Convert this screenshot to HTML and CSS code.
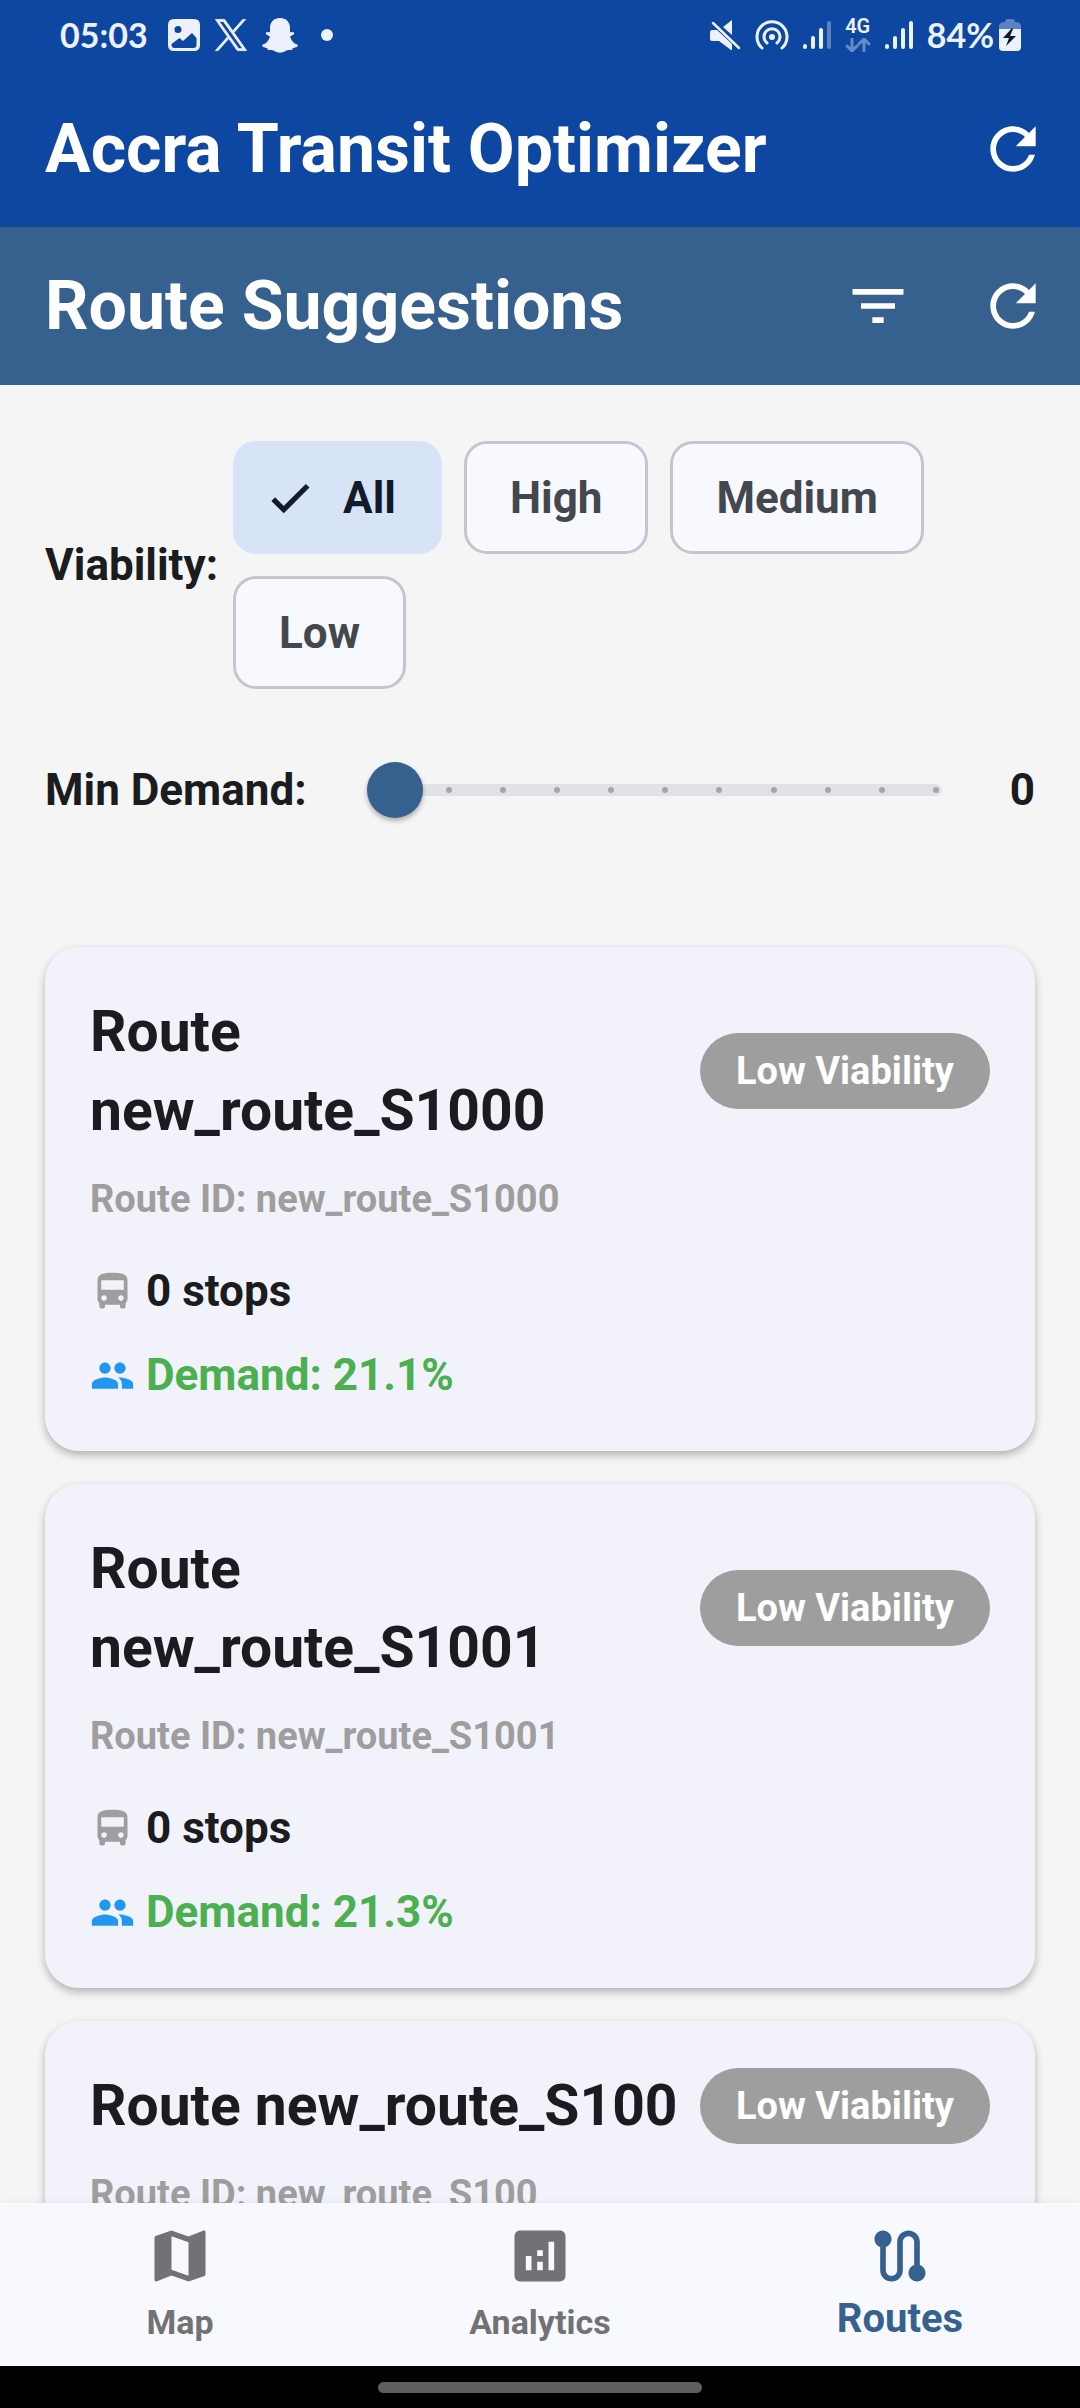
FILE: index.html
```html
<!DOCTYPE html>
<html lang="en">
<head>
<meta charset="utf-8">
<meta name="viewport" content="width=device-width, initial-scale=1">
<title>Accra Transit Optimizer</title>
<link rel="stylesheet" href="styles.css">
</head>
<body>
<svg class="sprite" aria-hidden="true">
  <symbol id="refresh" viewBox="0 0 24 24"><path d="M17.65 6.35C16.2 4.9 14.21 4 12 4c-4.42 0-7.99 3.58-7.99 8s3.57 8 7.99 8c3.73 0 6.84-2.55 7.73-6h-2.08c-.82 2.33-3.04 4-5.65 4-3.31 0-6-2.69-6-6s2.69-6 6-6c1.66 0 3.14.69 4.22 1.78L13 11h7V4l-2.35 2.35z"/></symbol>
  <symbol id="bus" viewBox="0 0 24 24"><path d="M4 16c0 .88.39 1.67 1 2.22V20c0 .55.45 1 1 1h1c.55 0 1-.45 1-1v-1h8v1c0 .55.45 1 1 1h1c.55 0 1-.45 1-1v-1.78c.61-.55 1-1.34 1-2.22V6c0-3.5-3.58-4-8-4s-8 .5-8 4v10zm3.5 1c-.83 0-1.5-.67-1.5-1.5S6.67 14 7.5 14s1.500.67 1.500 1.500S8.330 17 7.500 17zm9 0c-.83 0-1.500-.67-1.500-1.500s.67-1.500 1.500-1.500 1.500.67 1.500 1.500-.67 1.500-1.500 1.500zm1.500-6H6V6h12v5z"/></symbol>
  <symbol id="people" viewBox="0 0 24 24"><path d="M16 11c1.660 0 2.990-1.340 2.990-3S17.660 5 16 5c-1.660 0-3 1.340-3 3s1.340 3 3 3zm-8 0c1.660 0 2.990-1.340 2.990-3S9.660 5 8 5C6.340 5 5 6.340 5 8s1.340 3 3 3zm0 2c-2.330 0-7 1.170-7 3.500V19h14v-2.500c0-2.330-4.670-3.500-7-3.500zm8 0c-.29 0-.62.02-.97.05 1.160.84 1.970 1.970 1.970 3.450V19h6v-2.500c0-2.330-4.670-3.500-7-3.500z"/></symbol>
</svg>
<div class="app">
  <header class="app-header">
    <div class="status">
      <div class="status__group">
        <span class="status__time">05:03</span>
        <svg class="status__icon" viewBox="0 0 32 32"><path fill-rule="evenodd" d="M6 0h20q6 0 6 6v20q0 6-6 6H6q-6 0-6-6V6q0-6 6-6zM10 7a3.500 3.500 0 1 0 0 7a3.500 3.500 0 0 0 0-7zM3.500 25v1q0 3 3 3h19q3 0 3-3v-7l-4.500-5-9 8-3.500-3z"/></svg>
        <svg class="status__icon status__icon--x" viewBox="0 0 24 24"><path stroke="currentColor" stroke-width=".6" d="M14.095 10.316 22.286 1h-1.940L13.230 9.088 7.551 1H1l8.590 12.231L1 23h1.940l7.510-8.543L16.450 23H23l-8.905-12.684zm-2.658 3.022-.872-1.218L3.640 2.432h2.980l5.590 7.821.869 1.219 7.265 10.166h-2.982l-5.926-8.300z"/></svg>
        <svg class="status__icon status__icon--snap" viewBox="0 0 36 35"><path d="M18 0c6 0 10 4 10 10v4c1 .6 2-.2 3 0 1.500.5 1.500 2 .3 2.800L28 18.500c1 4 4 7 7 8 1.300.5 1 2-.3 2.500l-4 1.200c-.5 1-.3 1.800-1.200 1.800-2 0-4-.4-6 1-3 2.300-8 2.300-11 0-2-1.400-4-1-6-1-.9 0-.7-.8-1.200-1.800l-4-1.200C0 28.500-.3 27 1 26.500c3-1 6-4 7-8l-3.300-1.700C3.500 16 3.500 14.500 5 14c1-.2 2 .6 3 0v-4C8 4 12 0 18 0z"/></svg>
        <span class="status__dot"></span>
      </div>
      <div class="status__group">
        <svg class="status__icon" viewBox="0 0 32 32"><path d="M23 1v15l-9-8zM3 11h5l15 14v6h-1L10 22H3q-2 0-2-2v-7q0-2 2-2z"/><path d="M4 4 30 29" fill="none" stroke="currentColor" stroke-width="2.500" stroke-linecap="round"/></svg>
        <svg class="status__icon status__icon--line status__icon--hotspot" viewBox="0 0 34 32"><path d="M7 29a15 15 0 1 1 20 0M12 24a8 8 0 1 1 10 0"/><circle cx="17" cy="18" r="3" fill="currentColor" stroke="none"/></svg>
        <svg class="status__icon status__icon--line status__icon--signal" viewBox="0 0 28 32"><path d="M2 27v1M10 19v9M18 11v17"/><path d="M26 4v24" opacity=".35"/></svg>
        <span class="status__net">4G<svg class="status__icon--line status__arrows" viewBox="0 0 26 14"><path d="M7 1v12M2 8l5 5 5-5M19 13V1M14 6l5-5 5 5"/></svg></span>
        <svg class="status__icon status__icon--line status__icon--signal" viewBox="0 0 28 32"><path d="M2 27v1M10 19v9M18 11v17M26 4v24"/></svg>
        <span class="status__battery">84%<svg class="status__cell" viewBox="0 0 22 32"><path opacity=".35" d="M6 3q0-3 3-3h4q3 0 3 3 6 0 6 4v3H0V7q0-4 6-4z"/><path d="M0 10h22v18q0 4-4 4H4q-4 0-4-4z"/><path fill="#111a2c" d="M13 9 4 19h6l-3 8 10-10h-6l3-7z"/></svg></span>
      </div>
    </div>
    <div class="bar">
      <h1 class="bar__title">Accra Transit Optimizer</h1>
      <button class="icon-button" type="button" aria-label="Refresh data"><svg class="icon"><use href="#refresh"/></svg></button>
    </div>
  </header>
  <div class="bar bar--section">
    <h2 class="bar__title">Route Suggestions</h2>
    <button class="icon-button" type="button" aria-label="Filter"><svg class="icon" viewBox="0 0 24 24"><path d="M10 18h4v-2h-4v2zM3 6v2h18V6H3zm3 7h12v-2H6v2z"/></svg></button>
    <button class="icon-button" type="button" aria-label="Refresh routes"><svg class="icon"><use href="#refresh"/></svg></button>
  </div>

  <main class="content">
    <section class="filters">
      <div class="viability" role="group" aria-labelledby="viability-label">
        <span id="viability-label">Viability:</span>
        <div class="chips">
          <button class="chip chip--selected" type="button" aria-pressed="true"><svg class="chip__check" viewBox="0 0 24 24"><path d="M9 16.170 4.830 12l-1.420 1.410L9 19 21 7l-1.410-1.410z"/></svg>All</button>
          <button class="chip" type="button" aria-pressed="false">High</button>
          <button class="chip" type="button" aria-pressed="false">Medium</button>
          <button class="chip" type="button" aria-pressed="false">Low</button>
        </div>
      </div>
      <div class="demand">
        <label for="min-demand">Min Demand:</label>
        <div class="slider">
          <div class="slider__track"><i></i><i></i><i></i><i></i><i></i><i></i><i></i><i></i><i></i><i></i><i></i></div>
          <input class="slider__input" id="min-demand" type="range" min="0" max="100" step="10" value="0">
        </div>
        <output for="min-demand">0</output>
      </div>
    </section>

    <section class="routes">
      <article class="card">
        <div class="card__head"><h3 class="card__title">Route new_route_S1000</h3><span class="badge">Low Viability</span></div>
        <p class="card__id">Route ID: new_route_S1000</p>
        <p class="card__row"><svg class="card__icon card__icon--bus"><use href="#bus"/></svg>0 stops</p>
        <p class="card__row card__row--demand"><svg class="card__icon card__icon--people"><use href="#people"/></svg>Demand: 21.1%</p>
      </article>
      <article class="card">
        <div class="card__head"><h3 class="card__title">Route new_route_S1001</h3><span class="badge">Low Viability</span></div>
        <p class="card__id">Route ID: new_route_S1001</p>
        <p class="card__row"><svg class="card__icon card__icon--bus"><use href="#bus"/></svg>0 stops</p>
        <p class="card__row card__row--demand"><svg class="card__icon card__icon--people"><use href="#people"/></svg>Demand: 21.3%</p>
      </article>
      <article class="card">
        <div class="card__head"><h3 class="card__title">Route new_route_S100</h3><span class="badge">Low Viability</span></div>
        <p class="card__id">Route ID: new_route_S100</p>
      </article>
    </section>
  </main>

  <nav class="tabs">
    <a class="tab" href="#map"><svg class="icon" viewBox="0 0 24 24"><path d="m20.500 3-.16.03L15 5.100 9 3 3.360 4.900c-.21.07-.36.25-.36.48V20.500c0 .28.22.5.5.5l.16-.03L9 18.900l6 2.100 5.640-1.900c.21-.07.36-.25.36-.48V3.500c0-.28-.22-.5-.5-.5zM15 19l-6-2.110V5l6 2.110V19z"/></svg>Map</a>
    <a class="tab" href="#analytics"><svg class="icon" viewBox="0 0 24 24"><path d="M19 3H5c-1.100 0-2 .9-2 2v14c0 1.100.9 2 2 2h14c1.100 0 2-.9 2-2V5c0-1.100-.9-2-2-2zM9 17H7v-5h2v5zm4 0h-2v-3h2v3zm0-5h-2v-2h2v2zm4 5h-2V7h2v10z"/></svg>Analytics</a>
    <a class="tab tab--active" href="#routes" aria-current="page"><svg class="icon" viewBox="0 0 24 24"><path d="M19 15.180V7c0-2.210-1.790-4-4-4s-4 1.790-4 4v10c0 1.100-.9 2-2 2s-2-.9-2-2V8.820C8.160 8.400 9 7.300 9 6c0-1.660-1.340-3-3-3S3 4.340 3 6c0 1.300.84 2.400 2 2.820V17c0 2.210 1.790 4 4 4s4-1.790 4-4V7c0-1.100.9-2 2-2s2 .9 2 2v8.180c-1.160.41-2 1.510-2 2.820 0 1.660 1.340 3 3 3s3-1.340 3-3c0-1.310-.84-2.410-2-2.820z"/></svg>Routes</a>
  </nav>
  <div class="gesture"><span class="gesture__handle"></span></div>
</div>
</body>
</html>
```
FILE: styles.css
```css
* { box-sizing: border-box; }

body {
  margin: 0;
  font-family: Roboto, "Liberation Sans", sans-serif;
  font-weight: 700;
  font-size: 44px;
  line-height: 62px;
  color: #1a1c20;
  background: #f5f5f5;
}

h1, h2, h3, p { margin: 0; font-weight: inherit; }
button { font: inherit; color: inherit; border: 0; margin: 0; padding: 0; background: none; }
svg { fill: currentColor; flex: none; display: block; }
.sprite { display: none; }

.app { display: flex; flex-direction: column; height: 100vh; }

/* Status bar */
.app-header { background: #0d47a1; color: #fff; }
.status {
  display: flex;
  justify-content: space-between;
  align-items: center;
  height: 70px;
  padding: 0 59px 0 60px;
  color: #edf1fb;
  font-family: Lato, sans-serif;
  font-size: 34px;
  line-height: 40px;
}
.status__group { display: flex; align-items: center; gap: 14px; }
.status__time { width: 94px; }
.status__icon { width: 32px; height: 32px; }
.status__icon--x { width: 34px; height: 34px; }
.status__icon--snap { width: 36px; height: 35px; }
.status__icon--line {
  fill: none;
  stroke: currentColor;
  stroke-width: 3;
  stroke-linecap: round;
  stroke-linejoin: round;
}
.status__icon--hotspot { width: 34px; }
.status__icon--signal { width: 28px; stroke-width: 4; }
.status__dot { width: 12px; height: 12px; margin-left: 9px; border-radius: 50%; background: currentColor; }
.status__net { display: grid; gap: 4px; font: 600 20px/16px Roboto, sans-serif; justify-items: center; }
.status__arrows { width: 26px; height: 14px; opacity: .4; }
.status__battery { display: flex; align-items: center; gap: 5px; }
.status__cell { width: 22px; height: 32px; }

/* App bars */
.bar { display: flex; align-items: center; height: 157px; padding-left: 45px; color: #fff; }
.bar--section { height: 158px; background: #36618e; }
.bar__title { flex: 1; font-size: 68px; line-height: 80px; white-space: nowrap; }
.icon-button { display: grid; place-items: center; width: 135px; height: 135px; }
.icon { width: 68px; height: 68px; }

.content { flex: 1; min-height: 0; overflow: hidden; }

/* Filters */
.filters { display: grid; gap: 33px; padding: 56px 45px 0; }
.viability { display: flex; align-items: center; gap: 15px; }
.chips { display: flex; flex-wrap: wrap; gap: 22px; flex: 1; }
.chip {
  display: flex;
  align-items: center;
  gap: 28px;
  height: 113px;
  padding: 0 43px;
  border: 3px solid #c3c6cf;
  border-radius: 23px;
  background: #f8f9ff;
  color: #43474e;
}
.chip--selected { padding-left: 29px; border-color: #d7e3f7; background: #d7e3f7; color: #101c2b; }
.chip__check { width: 50px; height: 50px; stroke: currentColor; stroke-width: .5; }

.demand { display: flex; align-items: center; height: 136px; }
.demand output { width: 71px; text-align: right; }
.slider { display: grid; align-items: center; flex: 1; margin-left: 60px; }
.slider > * { grid-area: 1 / 1; }
.slider__track {
  display: flex;
  justify-content: space-between;
  align-items: center;
  height: 12px;
  margin: 0 22px;
  padding: 0 3px;
  border-radius: 6px;
  background: #e1e2e8;
}
.slider__track i { width: 6px; height: 6px; border-radius: 50%; background: #a4a5ac; }
.slider__input { appearance: none; width: 100%; height: 56px; margin: 0; background: none; }
.slider__input::-webkit-slider-thumb {
  appearance: none;
  width: 56px;
  height: 56px;
  border-radius: 50%;
  background: #36618e;
  box-shadow: 0 3px 5px rgba(0, 0, 0, .3);
}

/* Route cards */
.routes { display: grid; gap: 33px; padding: 89px 45px 45px; }
.card {
  padding: 45px;
  border-radius: 34px;
  background: #f2f3fa;
  box-shadow: 0 4px 8px rgba(0, 0, 0, .28);
}
.card__head { display: flex; align-items: center; gap: 22px; }
.card__title { flex: 1; font-size: 57px; line-height: 79px; }
.badge {
  padding: 11px 36px;
  border-radius: 38px;
  background: #9e9e9e;
  color: #fff;
  font-size: 38px;
  line-height: 54px;
  white-space: nowrap;
}
.card__id { margin-top: 22px; font-size: 38px; line-height: 54px; color: #9e9e9e; }
.card__row { display: flex; align-items: center; gap: 11px; margin-top: 22px; }
.card__id + .card__row { margin-top: 34px; }
.card__row--demand { color: #4caf50; }
.card__icon { width: 45px; height: 45px; }
.card__icon--bus { color: #9e9e9e; }
.card__icon--people { color: #2196f3; }

/* Bottom navigation */
.tabs {
  position: relative;
  display: grid;
  grid-template-columns: repeat(3, 1fr);
  height: 163px;
  background: #f8f9ff;
  box-shadow: 0 0 8px rgba(0, 0, 0, .06);
}
.tab {
  display: flex;
  flex-direction: column;
  align-items: center;
  gap: 8px;
  padding-top: 19px;
  color: #727274;
  font-size: 34px;
  line-height: 48px;
  text-decoration: none;
}
.tab--active { color: #36618e; font-size: 40px; line-height: 41px; }
.gesture { display: grid; place-items: center; height: 42px; background: #000; }
.gesture__handle { width: 30%; height: 11px; border-radius: 6px; background: #5e5e5e; }
```
